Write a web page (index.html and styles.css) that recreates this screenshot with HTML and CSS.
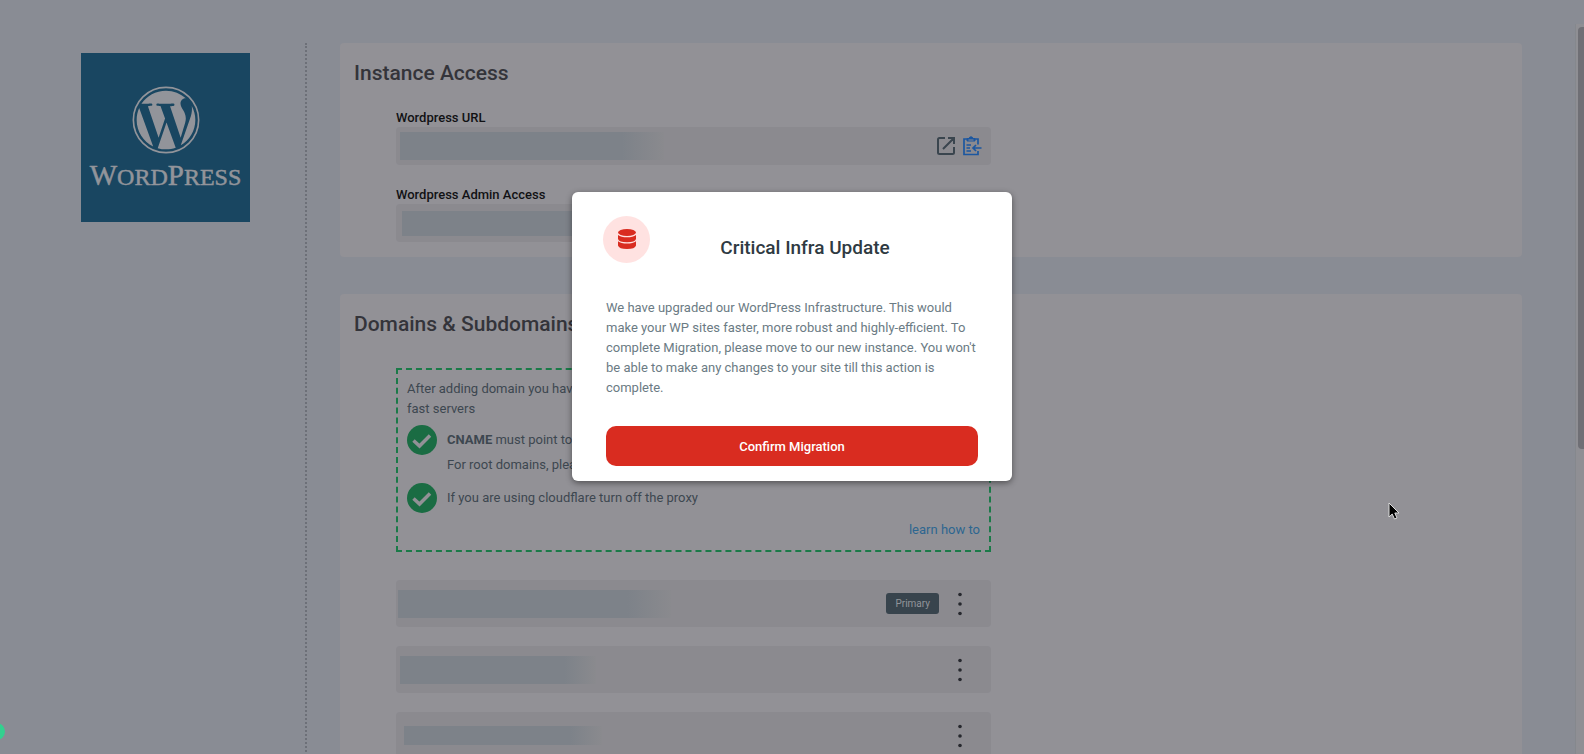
FILE: index.html
```html
<!DOCTYPE html>
<html lang="en">
    <head>
        <meta charset="utf-8">
        <title>Instance Access</title>
        <link rel="stylesheet" href="styles.css">
    </head>
    <body>

        <div class="page">

            <aside class="sidebar">
                <div class="logo">
                    <svg class="logo-mark" viewBox="-0.5 -0.5 25 25">
                        <circle cx="12" cy="12" r="12" fill="none" stroke="currentColor" stroke-width=".6"/>
                        <path fill="currentColor" d="M21.469 6.825c.84 1.537 1.318 3.3 1.318 5.175 0 3.979-2.156 7.456-5.363 9.325l3.295-9.527c.615-1.54.82-2.771.82-3.864 0-.405-.026-.78-.07-1.11m-7.981.105c.647-.03 1.232-.105 1.232-.105.582-.075.514-.93-.067-.899 0 0-1.755.135-2.88.135-1.064 0-2.85-.15-2.85-.15-.585-.03-.661.855-.075.885 0 0 .54.061 1.125.09l1.68 4.605-2.37 7.08L5.354 6.9c.649-.03 1.234-.1 1.234-.1.585-.075.516-.93-.065-.896 0 0-1.746.138-2.874.138-.2 0-.438-.008-.69-.015C4.911 3.15 8.235 1.215 12 1.215c2.809 0 5.365 1.072 7.286 2.833-.046-.003-.091-.009-.141-.009-1.06 0-1.812.923-1.812 1.914 0 .89.513 1.643 1.06 2.531.411.72.89 1.643.89 2.977 0 .915-.354 1.994-.821 3.479l-1.075 3.585-3.9-11.61.001.014zM12 22.784c-1.059 0-2.081-.153-3.048-.437l3.237-9.406 3.315 9.087c.024.053.05.101.078.149-1.12.393-2.325.609-3.582.609M1.211 12c0-1.564.336-3.05.935-4.39L7.29 21.709C3.694 19.96 1.212 16.271 1.211 12"/>
                    </svg>
                    <div class="logo-name"><span class="big">W</span>ORD<span class="big">P</span>RESS</div>
                </div>
            </aside>

            <main class="content">

                <section class="card">
                    <h2 class="card-title">Instance Access</h2>
                    <div class="card-body">

                        <h3 class="label">Wordpress URL</h3>
                        <div class="field">
                            <span class="masked masked-url"></span>
                            <button class="icon-btn open" aria-label="Open">
                                <svg viewBox="0 0 18 18" fill="none" stroke="currentColor" stroke-width="2">
                                    <path d="M8 1H2.500Q1 1 1 2.500V15.500Q1 17 2.500 17H15.500Q17 17 17 15.500V10M11 1H17V7M17 1L6 12"/>
                                </svg>
                            </button>
                            <button class="icon-btn copy" aria-label="Copy">
                                <svg viewBox="0 0 20 20" fill="none" stroke="currentColor" stroke-width="1.700">
                                    <path d="M16 8.500V3H2V18.500H16V15M19.500 12H11M14 9L11 12L14 15"/>
                                    <path d="M4.500 9H9M4.500 12H8M4.500 15H9" stroke-width="1.300"/>
                                    <path d="M5 2.500H6.500Q9 -1 11.500 2.500H13V5H5Z" fill="currentColor" stroke-width="1"/>
                                    <path d="M6.500 4H11.500" stroke="#8b8a8f" stroke-width="1"/>
                                </svg>
                            </button>
                        </div>

                        <h3 class="label">Wordpress Admin Access</h3>
                        <div class="field">
                            <span class="masked masked-admin"></span>
                        </div>

                    </div>
                </section>

                <section class="card">
                    <h2 class="card-title">Domains &amp; Subdomains</h2>
                    <div class="card-body">

                        <div class="notice">
                            <p class="notice-intro">After adding domain you have<br>fast servers</p>
                            <div class="step">
                                <svg class="check" viewBox="0 0 30 30">
                                    <circle cx="15" cy="15" r="15" fill="#1a6c43"/>
                                    <path d="M6.500 15.500L12.500 21L23 10.500" fill="none" stroke="#929196" stroke-width="3.500"/>
                                </svg>
                                <p><b>CNAME</b> must point to</p>
                            </div>
                            <p class="step-note">For root domains, please</p>
                            <div class="step">
                                <svg class="check" viewBox="0 0 30 30">
                                    <circle cx="15" cy="15" r="15" fill="#1a6c43"/>
                                    <path d="M6.500 15.500L12.500 21L23 10.500" fill="none" stroke="#929196" stroke-width="3.500"/>
                                </svg>
                                <p>If you are using cloudflare turn off the proxy</p>
                            </div>
                            <a class="learn" href="#">learn how to</a>
                        </div>

                        <div class="domain">
                            <span class="masked masked-first"></span>
                            <span class="badge">Primary</span>
                            <button class="dots" aria-label="More">
                                <svg viewBox="0 0 20 24" fill="currentColor"><circle cx="10" cy="2.500" r="1.800"/><circle cx="10" cy="12" r="1.800"/><circle cx="10" cy="21.500" r="1.800"/></svg>
                            </button>
                        </div>

                        <div class="domain">
                            <span class="masked masked-second"></span>
                            <button class="dots" aria-label="More">
                                <svg viewBox="0 0 20 24" fill="currentColor"><circle cx="10" cy="2.500" r="1.800"/><circle cx="10" cy="12" r="1.800"/><circle cx="10" cy="21.500" r="1.800"/></svg>
                            </button>
                        </div>

                        <div class="domain">
                            <span class="masked masked-third"></span>
                            <button class="dots" aria-label="More">
                                <svg viewBox="0 0 20 24" fill="currentColor"><circle cx="10" cy="2.500" r="1.800"/><circle cx="10" cy="12" r="1.800"/><circle cx="10" cy="21.500" r="1.800"/></svg>
                            </button>
                        </div>

                    </div>
                </section>

            </main>
        </div>

        <div class="scrollbar"><div class="thumb"></div></div>

        <div class="overlay">
            <div class="modal" role="dialog" aria-labelledby="modal-title">
                <div class="modal-head">
                    <div class="modal-icon">
                        <svg viewBox="0 0 18 20" fill="#d92c20">
                            <ellipse cx="9" cy="3.500" rx="9" ry="3.500"/>
                            <path d="M0 6Q3 8.300 9 8.300T18 6V10Q17 13.200 9 13.200T0 10Z"/>
                            <path d="M0 12.300Q3 14.600 9 14.600T18 12.300V16.500Q17 20 9 20T0 16.500Z"/>
                        </svg>
                    </div>
                    <h1 class="modal-title" id="modal-title">Critical Infra Update</h1>
                </div>
                <p class="modal-text">We have upgraded our WordPress Infrastructure. This would make your WP sites faster, more robust and highly-efficient. To complete Migration, please move to our new instance. You won't be able to make any changes to your site till this action is complete.</p>
                <button class="confirm">Confirm Migration</button>
            </div>
        </div>

        <div class="chat-dot"></div>

        <svg class="cursor" viewBox="0 0 12 18">
            <path d="M1 1V15L4.200 12L6.500 17L9 16L6.800 11H11Z" fill="#000" stroke="#ddd" stroke-width="1"/>
        </svg>

    </body>
</html>
```
FILE: styles.css
```css
*{
    margin: 0;
    padding: 0;
    box-sizing: border-box;
}

body{
    height: 100vh;
    overflow: hidden;
    position: relative;
    background: #898c94;
    font-family: Roboto, "Liberation Sans", sans-serif;
    font-size: 13px;
    line-height: 20px;
    color: #3d4750;
}

button{
    border: 0;
    background: none;
    font-family: inherit;
    cursor: pointer;
}

svg{
    display: block;
}

.page{
    display: flex;
    min-height: 100%;
    padding: 43px 62px 0 81px;
}

/* sidebar */
.sidebar{
    width: 226px;
    flex-shrink: 0;
    padding-top: 10px;
    border-right: 2px dotted #6d7078;
}

.logo{
    width: 169px;
    height: 169px;
    padding-top: 33px;
    background: #194661;
    color: #92949a;
    display: flex;
    flex-direction: column;
    align-items: center;
}

.logo-mark{
    width: 68px;
    height: 68px;
}

.logo-name{
    margin-top: 5px;
    font-family: "Liberation Serif", serif;
    font-size: 24px;
    line-height: 32px;
    -webkit-text-stroke: 0.5px #92949a;
}

.logo-name .big{
    font-size: 29px;
}

/* cards */
.content{
    flex: 1;
    margin-left: 33px;
}

.card{
    padding: 16px 14px 15px;
    margin-bottom: 37px;
    background: #929196;
    border-radius: 4px;
}

.card-title{
    font-size: 21px;
    font-weight: 500;
    line-height: 28px;
    color: #34343a;
}

.card-body{
    max-width: 637px;
    padding-left: 42px;
}

.label{
    padding-top: 22px;
    font-size: 13px;
    font-weight: 500;
    line-height: 18px;
    color: #111114;
}

.field + .label{
    padding-top: 21px;
}

.field{
    height: 38px;
    padding: 0 9px 0 4px;
    display: flex;
    align-items: center;
    background: #8b8a8f;
    border-radius: 4px;
}

.masked{
    height: 28px;
    margin-right: auto;
    background: linear-gradient(to right, #7d8289 84%, #8a8a8e);
}

.masked-url{ width: 264px; }
.masked-admin{ width: 200px; margin-left: 2px; height: 25px; }
.masked-first{ width: 273px; margin-left: -2px; }
.masked-second{ width: 196px; }
.masked-third{ width: 198px; margin-left: 4px; height: 19px; }

.icon-btn svg{
    width: 20px;
    height: 20px;
}

.open{
    color: #3a454e;
    margin-right: 7px;
}

.open svg{
    width: 18px;
    height: 18px;
}

.copy{
    color: #1c57a0;
}

/* dns notice */
.notice{
    margin-top: 30px;
    padding: 9px 9px 10px;
    border: 2px dashed #1a7a48;
    display: flex;
    flex-direction: column;
}

.notice-intro{
    margin-bottom: 6px;
}

.step{
    display: flex;
    align-items: center;
    gap: 10px;
}

.check{
    width: 30px;
    height: 30px;
}

.step-note{
    padding-left: 40px;
    margin-bottom: 8px;
}

.learn{
    align-self: flex-end;
    margin-top: 7px;
    color: #2d6690;
    text-decoration: none;
}

/* domain rows */
.domain{
    height: 47px;
    margin-top: 19px;
    padding: 0 21px 0 4px;
    display: flex;
    align-items: center;
    background: #8b8a8f;
    border-radius: 4px;
}

.notice + .domain{
    margin-top: 28px;
}

.badge{
    padding: 0 9px;
    margin-right: 11px;
    background: #38444d;
    color: #92959a;
    border-radius: 3px;
    font-size: 10px;
    line-height: 21px;
}

.dots{
    color: #26282e;
}

.dots svg{
    width: 20px;
    height: 24px;
}

/* scrollbar at the page edge */
.scrollbar{
    position: absolute;
    top: 24px;
    right: 0;
    bottom: 0;
    width: 9px;
    padding: 3px 0 0 2px;
    background: #8f8f94;
    border-left: 1px solid #85888d;
}

.thumb{
    height: 58%;
    background: #6f6f75;
    border-radius: 4px 0 0 4px;
}

/* modal */
.overlay{
    position: absolute;
    inset: 0;
    padding-top: 192px;
}

.modal{
    width: 440px;
    margin: 0 auto;
    padding: 24px 34px 15px;
    background: #fff;
    border-radius: 6px;
    box-shadow: 0 2px 6px rgba(0, 0, 0, 0.45);
}

.modal-head{
    display: flex;
    margin-left: -3px;
    margin-right: 18px;
}

.modal-icon{
    width: 47px;
    height: 47px;
    padding: 13px 15px;
    border-radius: 50%;
    background: #ffe2e1;
}

.modal-icon svg{
    width: 18px;
    height: 20px;
}

.modal-title{
    flex: 1;
    padding-top: 18px;
    text-align: center;
    font-size: 19px;
    font-weight: 500;
    line-height: 28px;
    color: #2f3a42;
}

.modal-text{
    margin-top: 35px;
    color: #6b7b84;
}

.confirm{
    display: block;
    width: 100%;
    height: 40px;
    margin-top: 28px;
    background: #d92c20;
    color: #fff;
    border-radius: 10px;
    font-size: 13px;
    font-weight: 500;
}

.chat-dot{
    position: absolute;
    left: -12px;
    bottom: 14px;
    width: 17px;
    height: 17px;
    border-radius: 50%;
    background: #33d08f;
}

.cursor{
    position: absolute;
    left: 1388px;
    top: 502px;
    width: 12px;
    height: 18px;
}
```
